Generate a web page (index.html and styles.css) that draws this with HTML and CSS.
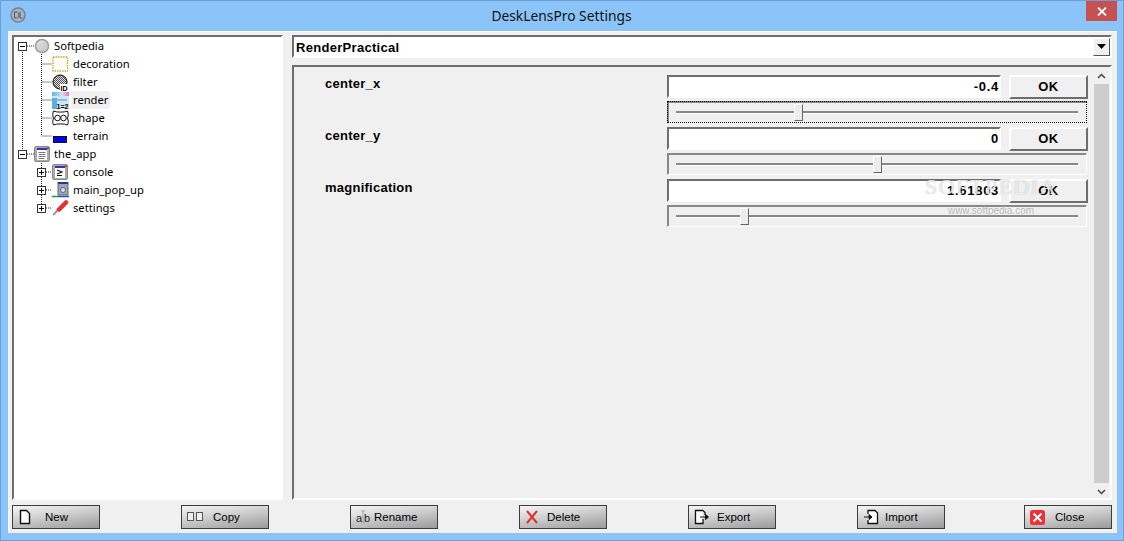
FILE: index.html
```html
<!DOCTYPE html>
<html lang="en">
<head>
<meta charset="utf-8">
<title>DeskLensPro Settings</title>
<link rel="stylesheet" href="styles.css">
</head>
<body>
<div class="window">
  <header class="titlebar">
    <svg class="app-icon" width="16" height="16" viewBox="0 0 16 16"><circle cx="8" cy="8" r="7" fill="#a9b4c2" stroke="#777f8a" stroke-width="1.4"/><path d="M4.500 5v6h2c1.600 0 2.500-1.200 2.500-3S8.100 5 6.500 5zM10 5v6h2.500" fill="none" stroke="#4d5662" stroke-width="1"/></svg>
    <h1 class="title">DeskLensPro Settings</h1>
    <button class="close-x"><svg width="10" height="9" viewBox="0 0 10 9"><path d="M1 .5l8 8M9 .5l-8 8" stroke="#fff" stroke-width="1.800"/></svg></button>
  </header>
  <div class="client">
    <div class="main">
      <nav class="tree sunken">
        <svg class="tree-lines" width="100" height="200" viewBox="0 0 100 200">
          <g fill="none" stroke="#222" stroke-dasharray="1 1">
            <path d="M6.500 15v97M25.500 17v82M25.500 27h11M25.500 45h11M25.500 63h11M25.500 81h11M25.500 99h11M11 9h7M11 117h7M25.500 126v41M30 135h6M30 153h6M30 171h6"/>
          </g>
        </svg>
        <div class="row root"><span class="slot"><i class="exp minus"></i></span>
          <svg class="ico" width="16" height="16" viewBox="0 0 16 16"><defs><linearGradient id="g1" x1="0" y1="0" x2="1" y2="1"><stop offset="0" stop-color="#d8f0d0"/><stop offset=".4" stop-color="#d4d4d8"/><stop offset="1" stop-color="#c2c8c2"/></linearGradient></defs><circle cx="8" cy="8" r="6.500" fill="url(#g1)" stroke="#9aa09a" stroke-width="1.500"/></svg>
          <span class="label">Softpedia</span></div>
        <div class="row child"><span class="slot"></span>
          <svg class="ico" width="17" height="16" viewBox="0 0 17 16"><rect x="1" y="1" width="14.500" height="14" fill="none" stroke="#c9a81c" stroke-width="1.300" stroke-dasharray="1.500 1"/></svg>
          <span class="label">decoration</span></div>
        <div class="row child"><span class="slot"></span>
          <svg class="ico" width="17" height="17" viewBox="0 0 17 17"><defs><pattern id="chk" width="2" height="2" patternUnits="userSpaceOnUse"><rect width="2" height="2" fill="#ddd"/><rect width="1" height="1" fill="#555"/><rect x="1" y="1" width="1" height="1" fill="#555"/></pattern></defs><circle cx="8" cy="8" r="7" fill="url(#chk)" stroke="#000"/><rect x="8" y="10" width="9" height="7" fill="#fff"/><text class="ico-text" x="8.500" y="16.500">ID</text></svg>
          <span class="label">filter</span></div>
        <div class="row child"><span class="slot"></span>
          <svg class="ico" width="17" height="17" viewBox="0 0 17 17"><defs><linearGradient id="g2" x1="0" y1="0" x2="1" y2="0"><stop offset="0" stop-color="#5ab4ea"/><stop offset=".6" stop-color="#cfe4f4"/><stop offset="1" stop-color="#f070a0"/></linearGradient></defs><rect width="17" height="4" fill="url(#g2)"/><rect y="4" width="17" height="13" fill="#cfe6f6"/><rect y="6" width="5" height="11" fill="#5ab0e0"/><rect x="5" y="7" width="10" height="2" fill="#8fbde0"/><text class="ico-text" x="4.500" y="16.500">1=2</text></svg>
          <span class="label current">render</span></div>
        <div class="row child"><span class="slot"></span>
          <svg class="ico" width="17" height="16" viewBox="0 0 17 16"><path d="M1.500 1c3 1.500 11 1.500 14 0 1 3 1 4.500 0 7 1 3 1 4.500 0 7-3-1.500-11-1.500-14 0-1-2.500-1-4 0-7-1-2.500-1-4 0-7z" fill="#fff" stroke="#111"/><circle cx="5.500" cy="8" r="2.800" fill="none" stroke="#111"/><circle cx="11.500" cy="8" r="2.800" fill="none" stroke="#111"/></svg>
          <span class="label">shape</span></div>
        <div class="row child"><span class="slot"></span>
          <svg class="ico" width="17" height="16" viewBox="0 0 17 16"><rect x="1.500" y="8.500" width="13" height="6" fill="#0000f0" stroke="#111"/></svg>
          <span class="label">terrain</span></div>
        <div class="row root"><span class="slot"><i class="exp minus"></i></span>
          <svg class="ico" width="16" height="16" viewBox="0 0 16 16"><rect x=".5" y=".5" width="15" height="15" rx="1.500" fill="#aaa" stroke="#8a8a8a"/><rect x="3" y="2" width="10" height="12" fill="#fff"/><rect x="3" y="2" width="10" height="2" fill="#3030c0"/><rect x="13" y="1" width="2" height="2" fill="#d04040"/><path d="M4.500 6.500h7M4.500 8.500h7M4.500 10.500h7M4.500 12.500h6" stroke="#777"/></svg>
          <span class="label">the_app</span></div>
        <div class="row child"><span class="slot"><i class="exp plus"></i></span>
          <svg class="ico" width="17" height="16" viewBox="0 0 17 16"><rect x=".5" y=".5" width="15" height="15" rx="1.500" fill="#aaa" stroke="#8a8a8a"/><rect x="3" y="2" width="10" height="12" fill="#fff"/><rect x="3" y="2" width="10" height="2" fill="#3030c0"/><rect x="13" y="1" width="2" height="2" fill="#d04040"/><path d="M5 6l5 2-5 2M5 11.500h5" fill="none" stroke="#111" stroke-width="1.200"/></svg>
          <span class="label">console</span></div>
        <div class="row child"><span class="slot"><i class="exp plus"></i></span>
          <svg class="ico" width="17" height="16" viewBox="0 0 17 16"><rect x="6" y="0" width="10" height="13" fill="#98a8b8" stroke="#667"/><rect x="6" y="0" width="10" height="2" fill="#3030a0"/><circle cx="11" cy="8" r="2.500" fill="#dde" stroke="#667"/><path d="M0 14.500h6" stroke="#2a9a2a" stroke-width="1.500"/><path d="M6 14.500h11" stroke="#2050d0" stroke-width="1.500"/></svg>
          <span class="label">main_pop_up</span></div>
        <div class="row child"><span class="slot"><i class="exp plus"></i></span>
          <svg class="ico" width="17" height="16" viewBox="0 0 17 16"><path d="M1 15l6-6" stroke="#999" stroke-width="2"/><path d="M7 9.500l7-7" stroke="#e83030" stroke-width="4.500" stroke-linecap="round"/></svg>
          <span class="label">settings</span></div>
      </nav>
      <section class="side">
        <div class="combo sunken">
          <span class="combo-value">RenderPractical</span>
          <span class="combo-btn"><svg width="9" height="5" viewBox="0 0 9 5"><path d="M0 0h9L4.500 5z" fill="#000"/></svg></span>
        </div>
        <div class="panel sunken">
          <div class="params">
            <div class="param">
              <span class="pname">center_x</span>
              <span class="field sunken">-0.4</span>
              <button class="ok raised">OK</button>
              <div class="slider sunken focus"><span class="track"></span><span class="thumb t1"></span></div>
            </div>
            <div class="param">
              <span class="pname">center_y</span>
              <span class="field sunken">0</span>
              <button class="ok raised">OK</button>
              <div class="slider sunken"><span class="track"></span><span class="thumb t2"></span></div>
            </div>
            <div class="param">
              <span class="pname">magnification</span>
              <span class="field sunken">1.61803</span>
              <button class="ok raised">OK</button>
              <div class="slider sunken"><span class="track"></span><span class="thumb t3"></span></div>
            </div>
          </div>
          <div class="scrollbar">
            <svg class="arrow" width="9" height="6" viewBox="0 0 9 6"><path d="M1 5l3.500-3.500L8 5" fill="none" stroke="#444" stroke-width="1.500"/></svg>
            <div class="sb-thumb"></div>
            <svg class="arrow" width="9" height="6" viewBox="0 0 9 6"><path d="M1 1l3.500 3.500L8 1" fill="none" stroke="#444" stroke-width="1.500"/></svg>
          </div>
        </div>
      </section>
    </div>
    <footer class="footer">
      <button class="btn b-new"><svg width="14" height="16" viewBox="0 0 14 16"><path d="M2.500 1.500h6l3 3v10h-9z" fill="#fff" stroke="#111" stroke-width="1.400"/></svg><span>New</span></button>
      <button class="btn b-copy"><svg width="16" height="10" viewBox="0 0 16 10"><rect x=".5" y=".5" width="6" height="8" fill="#eee" stroke="#555"/><rect x="9.500" y=".5" width="6" height="8" fill="#eee" stroke="#555"/></svg><span>Copy</span></button>
      <button class="btn b-rename"><svg width="16" height="14" viewBox="0 0 16 14"><path d="M8 1v12M6 1h4M6 13h4" stroke="#aaa"/><text class="ab" x="1" y="11.500">a</text><text class="ab" x="9" y="11.500">b</text></svg><span>Rename</span></button>
      <button class="btn b-delete"><svg width="14" height="14" viewBox="0 0 14 14"><path d="M2 1l10 12M12 1L2 13" stroke="#e03030" stroke-width="2"/></svg><span>Delete</span></button>
      <button class="btn b-export"><svg width="16" height="16" viewBox="0 0 16 16"><path d="M9 1.500H1.500v13H9V10M9 1.500l2 2V6" fill="#fff" stroke="#111" stroke-width="1.300"/><path d="M6 8h8M11.500 5.500L14.500 8l-3 2.500z" fill="#111" stroke="#111"/></svg><span>Export</span></button>
      <button class="btn b-import"><svg width="16" height="16" viewBox="0 0 16 16"><path d="M5 5V1.500h7l2.500 2.500v10.500H5V11" fill="#fff" stroke="#111" stroke-width="1.300"/><path d="M1 8h7M6 5.500L9 8l-3 2.500z" fill="#111" stroke="#111"/></svg><span>Import</span></button>
      <button class="btn b-close"><svg width="15" height="15" viewBox="0 0 15 15"><rect width="15" height="15" rx="2.500" fill="#f03038"/><path d="M3.500 3.500l8 8M11.500 3.500l-8 8" stroke="#fff" stroke-width="2"/></svg><span>Close</span></button>
    </footer>
    <div class="watermark"><span class="wm-big">SOFTPEDIA</span><span class="wm-small">www.softpedia.com</span></div>
  </div>
</div>
</body>
</html>
```
FILE: styles.css
```css
* { box-sizing: border-box; }
html, body { margin: 0; padding: 0; }
body { width: 1124px; height: 541px; overflow: hidden; font-family: "Noto Sans", "Liberation Sans", sans-serif; }
.window { width: 1124px; height: 541px; background: #8ac4f9; border: 1px solid #6c9fd3; display: flex; flex-direction: column; padding: 0 6px 7px 7px; }
.titlebar { height: 30px; flex: none; display: flex; align-items: center; position: relative; }
.app-icon { margin-left: 2px; margin-top: -2px; }
.title { margin: 0; position: absolute; left: 0; right: 0; top: 6px; padding-right: 2px; text-align: center; font-size: 13.800px; line-height: 18px; font-weight: 400; color: #111; font-family: "Noto Sans", sans-serif; }
.close-x { position: absolute; right: 0; top: 0; width: 31px; height: 20px; border: 0; padding: 0; background: #c75050; display: flex; align-items: center; justify-content: center; }
.client { flex: 1; background: #f0f0f0; padding: 4px 5px 4px 4px; display: flex; flex-direction: column; position: relative; box-shadow: inset 1px 1px 0 #fafafa; }
.main { flex: 1; display: flex; gap: 9px; min-height: 0; }
.sunken { border-style: solid; border-width: 2px; border-color: #6e6e6e #fff #fff #6e6e6e; }
.raised { border-style: solid; border-width: 2px; border-color: #fff #6e6e6e #6e6e6e #fff; }
.tree { width: 271px; background: #fff; position: relative; flex: none; font-size: 11.200px; color: #000; }
.tree-lines { position: absolute; left: 2px; top: 0; pointer-events: none; }
.row { height: 18px; display: flex; align-items: center; position: relative; }
.root { padding-left: 4px; }
.child { padding-left: 23px; }
.root .slot { width: 16px; }
.child .slot { width: 15px; }
.slot { flex: none; display: flex; }
.exp { width: 9px; height: 9px; border: 1px solid #333; background: #fff; display: block; position: relative; }
.exp::before { content: ""; position: absolute; left: 1px; right: 1px; top: 3px; height: 1px; background: #000; }
.plus::after { content: ""; position: absolute; top: 1px; bottom: 1px; left: 3px; width: 1px; background: #000; }
.ico { flex: none; position: relative; background: #fff; }
.ico-text { font: 700 7px "Liberation Sans", sans-serif; fill: #000; }
.ab { font: 11px "Liberation Sans", sans-serif; fill: #222; }
.label { margin-left: 2px; padding: 0 2px; line-height: 18px; white-space: nowrap; }
.current { background: #f0f0f0; }
.side { flex: 1; display: flex; flex-direction: column; gap: 7px; min-width: 0; }
.combo { height: 23px; flex: none; background: #fff; display: flex; align-items: center; justify-content: space-between; padding: 1px 0 0 2px; }
.combo-value { font: 700 13px "Liberation Sans", sans-serif; letter-spacing: .3px; color: #000; }
.combo-btn { width: 17px; height: 18px; margin-top: -1px; background: #f0f0f0; border: 1px solid; border-color: #fff #555 #555 #fff; display: flex; align-items: center; justify-content: center; }
.panel { flex: 1; background: #f0f0f0; display: flex; min-height: 0; }
.params { flex: 1; padding-top: 8px; padding-left: 373px; min-width: 0; }
.param { position: relative; display: grid; grid-template-columns: 334px 79px; column-gap: 8px; grid-template-rows: 24px 22px; row-gap: 2px; height: 52px; }
.pname { position: absolute; right: 100%; width: 342px; top: 1px; font: 700 13px/16px "Liberation Sans", sans-serif; letter-spacing: .25px; color: #000; }
.field { height: 23px; background: #fff; text-align: right; padding: 0; font: 700 13px/20px "Liberation Sans", sans-serif; letter-spacing: .7px; color: #000; }
.ok { height: 24px; background: #f0f0f0; padding: 0; font: 700 13px/20px "Liberation Sans", sans-serif; letter-spacing: .5px; color: #000; }
.slider { grid-column: 1 / 3; height: 22px; width: 420px; background: #f0f0f0; border-width: 1px; border-color: #888 #fff #fff #888; box-shadow: inset 1px 1px 0 #888; display: flex; align-items: center; position: relative; padding: 0 8px; }
.focus { outline: 1px dotted #000; outline-offset: -1px; }
.track { display: block; flex: 1; height: 2px; background: #888; border-bottom: 1px solid #fff; box-sizing: content-box; }
.thumb { position: absolute; top: 2px; width: 9px; height: 17px; background: #ececec; border: 1px solid; border-color: #fff #666 #666 #fff; }
.t1 { left: 126px; }
.t2 { left: 205px; }
.t3 { left: 72px; }
.scrollbar { width: 16px; flex: none; margin-right: 1px; display: flex; flex-direction: column; align-items: center; padding-top: 6px; }
.arrow { flex: none; }
.sb-thumb { width: 15px; height: 399px; background: #cdcdcd; margin: 5px 0 6px 1px; flex: none; }
.footer { height: 24px; flex: none; margin-top: 5px; display: flex; gap: 81px; }
.btn { width: 88px; height: 24px; flex: none; border: 1px solid #3c3c3c; padding: 0 0 0 5px; display: flex; align-items: center; font: 11.500px "Liberation Sans", sans-serif; color: #000; background: linear-gradient(172deg, #f4f4f4 0%, #dcdcdc 30%, #9a9a9a 100%); }
.b-new span { margin-left: 13px; }
.b-copy span { margin-left: 10px; }
.b-rename { padding-left: 4px; }
.b-rename span { margin-left: 3px; }
.b-delete span { margin-left: 8px; }
.b-export span { margin-left: 7px; }
.b-import span { margin-left: 6px; }
.b-close { margin-left: -2px; }
.b-close span { margin-left: 10px; }
.watermark { position: absolute; left: 918px; top: 145px; width: 130px; display: flex; flex-direction: column; align-items: center; pointer-events: none; }
.wm-big { font: 400 22px/22px "Liberation Serif", serif; letter-spacing: 1.500px; color: rgba(255, 255, 255, .75); text-shadow: 0 0 1px rgba(140, 140, 140, .7); white-space: nowrap; }
.wm-small { margin-top: 7px; font: 10px/12px "Liberation Sans", sans-serif; color: rgba(170, 170, 170, .8); }
```
